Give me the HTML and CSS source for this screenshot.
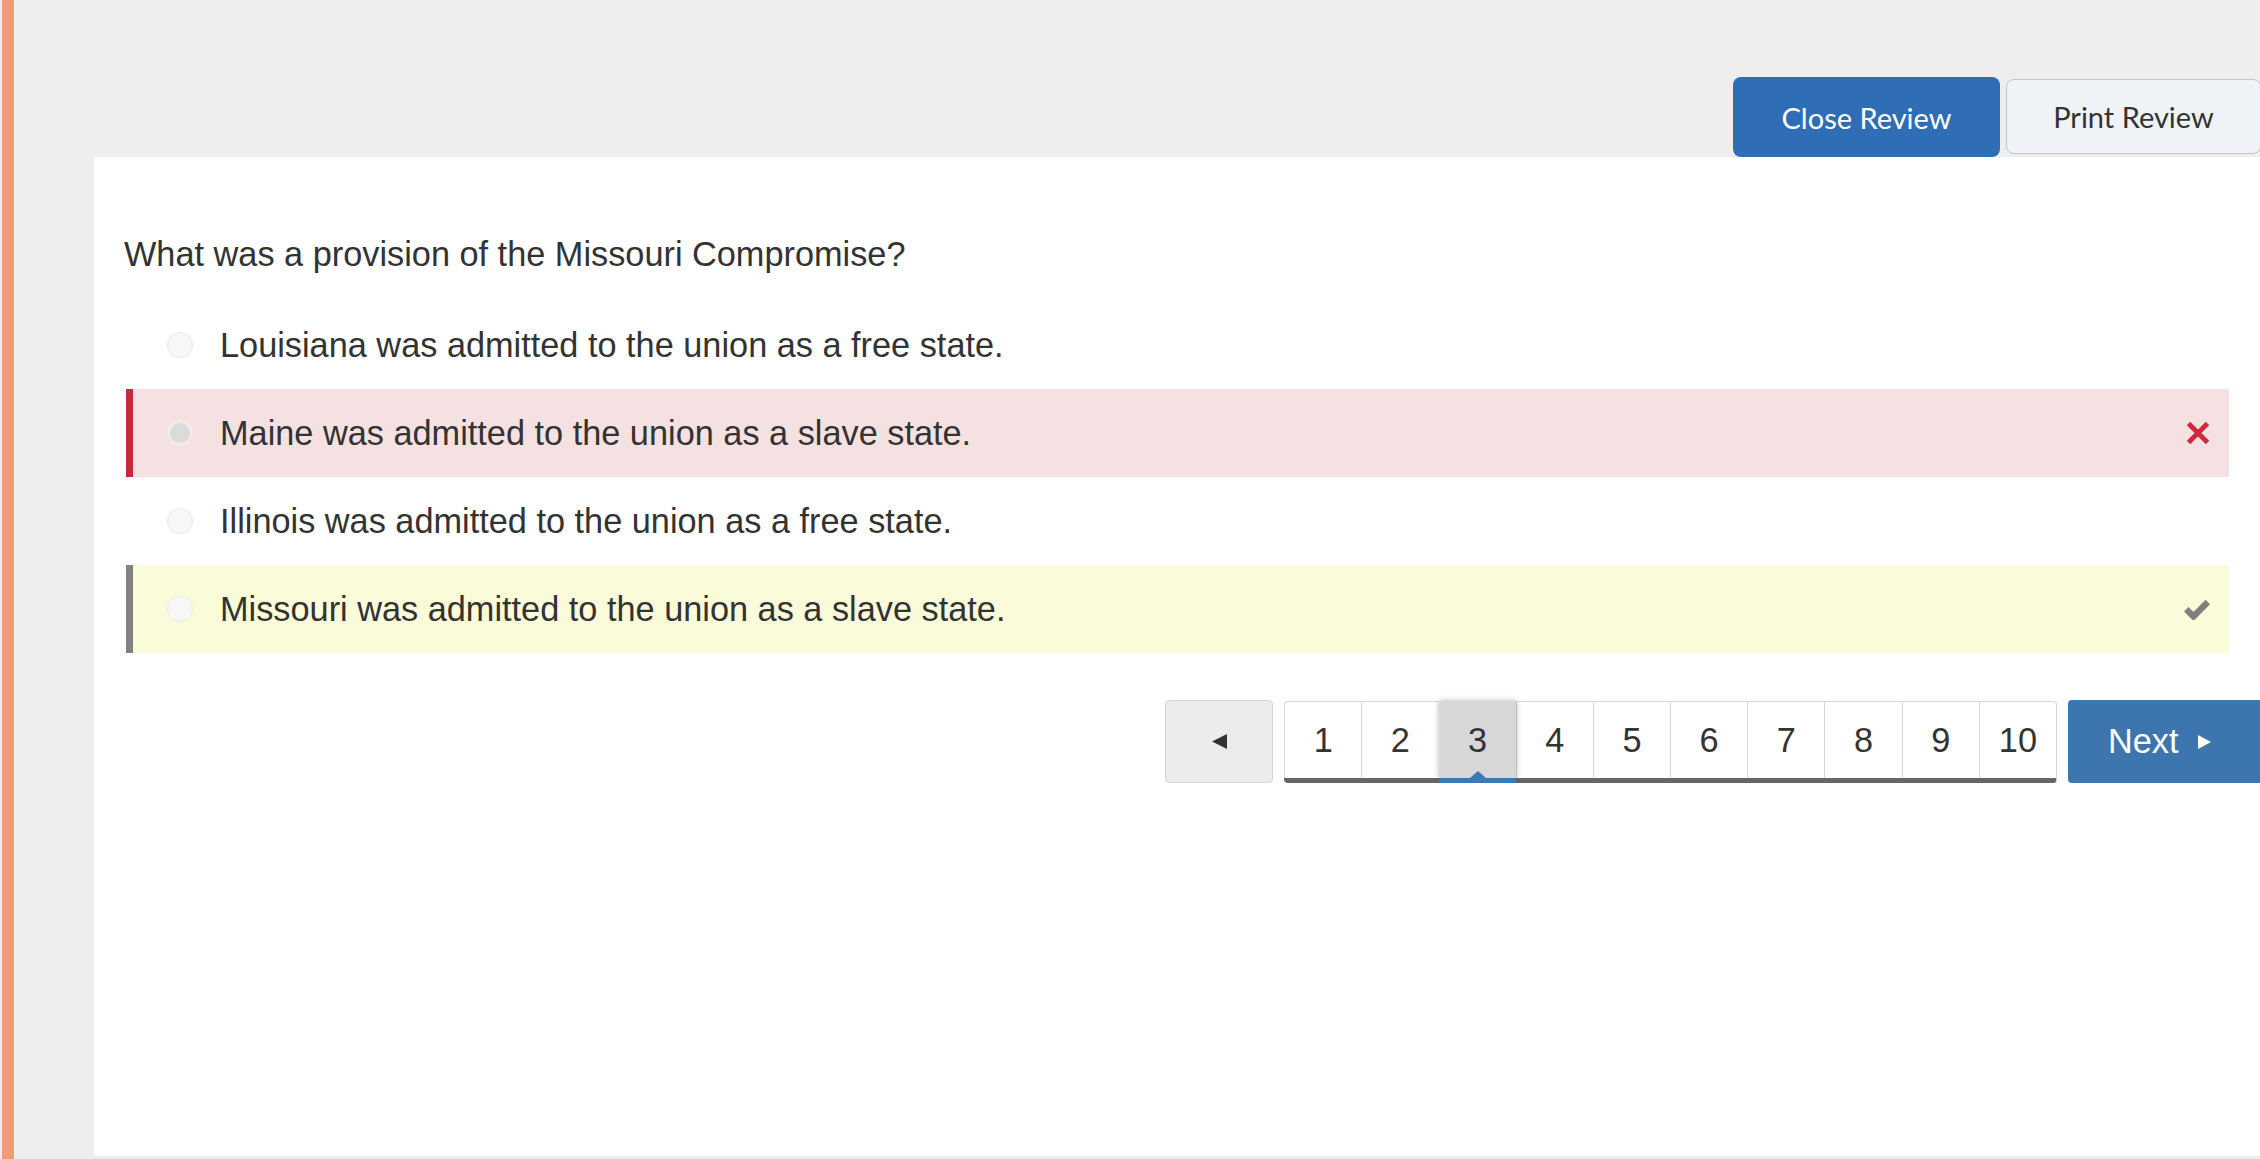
FILE: index.html
```html
<!DOCTYPE html>
<html lang="en">
<head>
<meta charset="utf-8">
<title>Quiz Review</title>
<link rel="stylesheet" href="styles.css">
</head>
<body>
<div class="app">
  <div class="accent"></div>
  <div class="main">
    <header class="topbar">
      <button class="btn btn-primary">Close Review</button>
      <button class="btn btn-secondary">Print Review</button>
    </header>
    <section class="panel">
      <p class="question">What was a provision of the Missouri Compromise?</p>
      <ul class="options">
        <li class="option">
          <span class="radio"></span>
          <span class="label">Louisiana was admitted to the union as a free state.</span>
        </li>
        <li class="option incorrect">
          <span class="radio checked"></span>
          <span class="label">Maine was admitted to the union as a slave state.</span>
          <svg class="mark" width="24" height="24" viewBox="0 0 24 24" aria-hidden="true">
            <path d="M2.5 2.5 L21.5 21.5 M21.5 2.5 L2.5 21.5" stroke="#cf2a3b" stroke-width="4.8" fill="none"/>
          </svg>
        </li>
        <li class="option">
          <span class="radio"></span>
          <span class="label">Illinois was admitted to the union as a free state.</span>
        </li>
        <li class="option correct">
          <span class="radio"></span>
          <span class="label">Missouri was admitted to the union as a slave state.</span>
          <svg class="mark" width="26" height="22" viewBox="0 0 26 22" aria-hidden="true">
            <path d="M2.2 11.2 L9.5 18.5 L23.8 4" stroke="#808080" stroke-width="6.4" fill="none"/>
          </svg>
        </li>
      </ul>
      <nav class="pager">
        <button class="pager-prev" aria-label="Previous">
          <svg width="15" height="15" viewBox="0 0 15 15" aria-hidden="true"><path d="M0 7.5 L15 0 L15 15 Z" fill="#333"/></svg>
        </button>
        <div class="pages">
          <span class="page">1</span>
          <span class="page">2</span>
          <span class="page current">3</span>
          <span class="page">4</span>
          <span class="page">5</span>
          <span class="page">6</span>
          <span class="page">7</span>
          <span class="page">8</span>
          <span class="page">9</span>
          <span class="page">10</span>
        </div>
        <button class="pager-next">Next<svg width="13" height="14" viewBox="0 0 13 14" aria-hidden="true"><path d="M0 0 L13 7 L0 14 Z" fill="#fff"/></svg></button>
      </nav>
    </section>
  </div>
</div>
</body>
</html>
```
FILE: styles.css
```css
html, body {
  margin: 0;
  height: 100%;
}
body {
  background: #eeeeee;
  font-family: "Liberation Sans", Arial, sans-serif;
  color: #333333;
}
.app {
  display: flex;
  height: 100vh;
}
.accent {
  flex: none;
  width: 12px;
  margin-left: 2px;
  background: #ef9a78;
}
.main {
  flex: 1;
  display: flex;
  flex-direction: column;
  padding-left: 80px;
  padding-bottom: 3px;
  min-width: 0;
}
.topbar {
  flex: none;
  height: 157px;
  display: flex;
  justify-content: flex-end;
  align-items: flex-end;
}
.btn {
  font-family: Lato, "Liberation Sans", sans-serif;
  font-size: 29px;
  border-radius: 8px;
  padding: 0;
  cursor: pointer;
}
.btn-primary {
  width: 267px;
  height: 80px;
  background: #2f6db6;
  color: #ffffff;
  border: none;
}
.btn-secondary {
  width: 255px;
  height: 75px;
  margin: 0 -1px 3px 6px;
  background: #eff3f8;
  border: 1.5px solid #c3c3c3;
  color: #333333;
}
.panel {
  flex: 1;
  background: #ffffff;
  padding: 77px 31px 0 30px;
}
.question {
  margin: 0;
  font-size: 34.3px;
  line-height: 40px;
}
.options {
  list-style: none;
  margin: 27px 0 0 2px;
  padding: 0;
}
.option {
  height: 88px;
  display: flex;
  align-items: center;
  border-left: 7px solid transparent;
  padding: 0 19px 0 34px;
  font-size: 34.3px;
}
.option.incorrect {
  background: #f5e1e1;
  border-left-color: #c92a3a;
}
.option.correct {
  background: #fafbd8;
  border-left-color: #808080;
}
.radio {
  flex: none;
  width: 26px;
  height: 26px;
  box-sizing: border-box;
  border-radius: 50%;
  border: 1.5px solid #e8e8e8;
  background: #f8f8f8;
  margin-right: 27px;
}
.radio.checked {
  border: 3.5px solid #f1ecec;
  background: #dcdada;
}
.label {
  flex: 1;
}
.mark {
  flex: none;
}
.pager {
  display: flex;
  justify-content: flex-end;
  margin: 47px -31px 0 0;
  height: 83px;
}
.pager-prev {
  width: 108px;
  height: 83px;
  box-sizing: border-box;
  background: #ececec;
  border: 1px solid #d7d7d7;
  border-radius: 4px;
  display: flex;
  align-items: center;
  justify-content: center;
  padding: 0;
}
.pages {
  display: flex;
  margin-left: 11px;
  height: 82px;
  box-sizing: border-box;
  border-right: 1px solid #d7d7d7;
  border-bottom: 5px solid #666666;
  border-radius: 4px;
  margin-top: 1px;
}
.page {
  position: relative;
  width: 77.2px;
  height: 77px;
  box-sizing: border-box;
  display: flex;
  align-items: center;
  justify-content: center;
  font-size: 34.3px;
  color: #333333;
  border-left: 1px solid #d7d7d7;
  border-top: 1px solid #d7d7d7;
  background: #ffffff;
}
.page:first-child {
  border-top-left-radius: 4px;
}
.page:last-child {
  border-top-right-radius: 4px;
}
.page.current {
  background: #d7d7d7;
  border-color: #d7d7d7;
  box-shadow: 0 0 6px rgba(0, 0, 0, 0.28);
  z-index: 1;
}
.page.current::after {
  content: "";
  position: absolute;
  left: -1px;
  right: 0;
  bottom: -5px;
  height: 5px;
  background: #3a78b8;
}
.page.current::before {
  content: "";
  position: absolute;
  left: 50%;
  bottom: 0;
  transform: translateX(-50%);
  border-left: 8px solid transparent;
  border-right: 8px solid transparent;
  border-bottom: 7px solid #3a78b8;
}
.pager-next {
  width: 192px;
  height: 83px;
  margin-left: 11px;
  background: #3d76ae;
  color: #ffffff;
  border: none;
  border-radius: 4px 0 0 4px;
  font-family: "Liberation Sans", Arial, sans-serif;
  font-size: 34.3px;
  text-align: left;
  padding: 0 0 0 40px;
  display: flex;
  align-items: center;
}
.pager-next svg {
  margin-left: 19px;
}
```
